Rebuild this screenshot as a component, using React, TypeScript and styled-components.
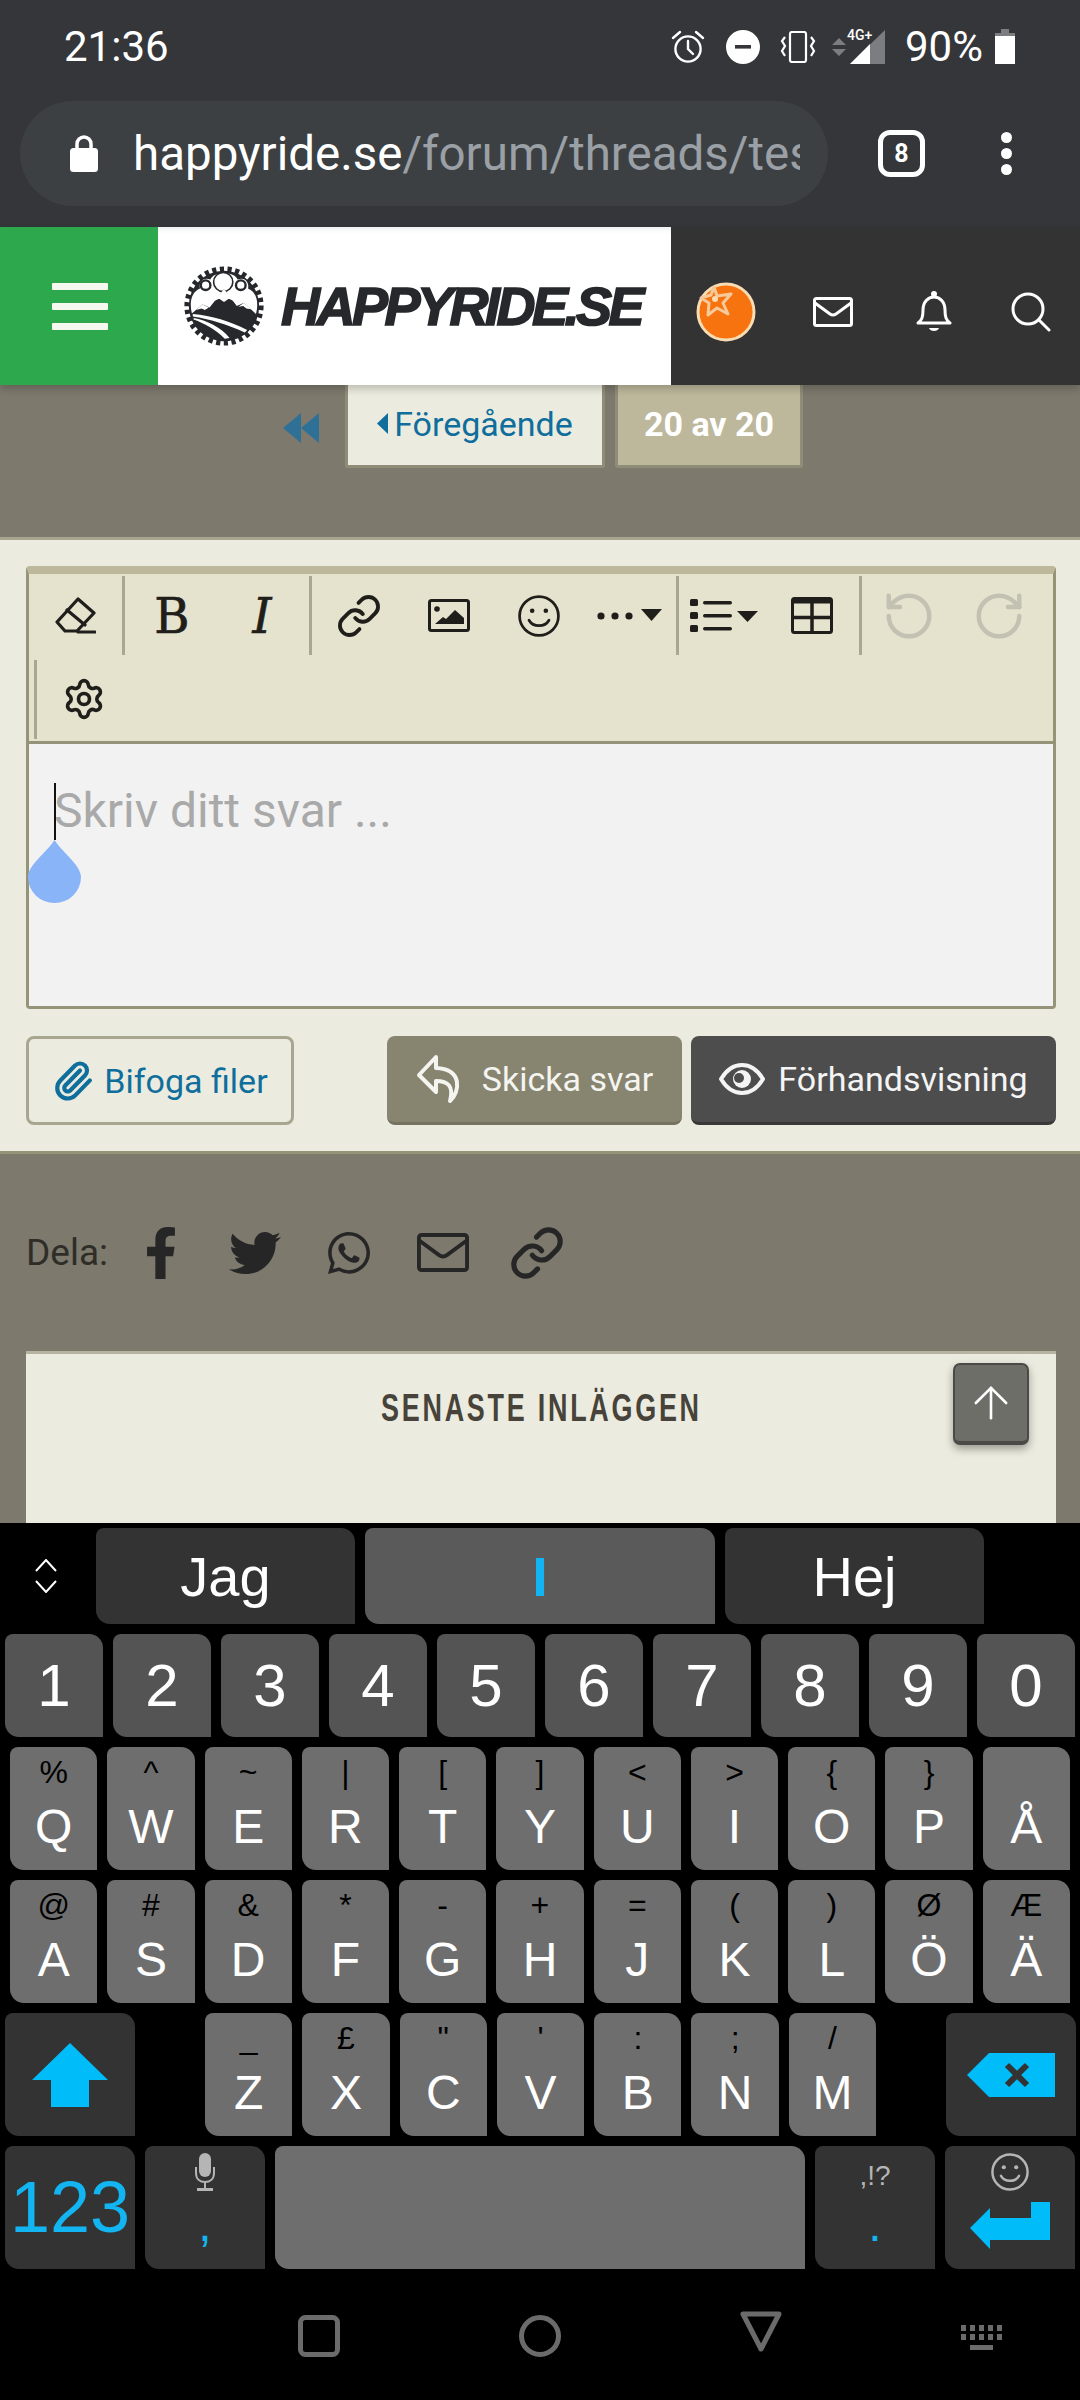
import styled, { createGlobalStyle } from "styled-components";
import { Link, RotateCcw, RotateCw, Settings, ArrowUp, Paperclip } from "lucide-react";
import { FaFacebookF, FaTwitter, FaWhatsapp } from "react-icons/fa";

const GlobalStyle = createGlobalStyle`
  html, body {
    margin: 0;
    padding: 0;
    background: #000;
    font-family: Roboto, "Liberation Sans", sans-serif;
  }
  * {
    box-sizing: border-box;
  }
  svg {
    display: block;
    flex: none;
  }
`;

const Phone = styled.div`
  width: 1080px;
  height: 2400px;
  display: flex;
  flex-direction: column;
  overflow: hidden;
`;

/* browser chrome */
const Chrome = styled.header`
  height: 227px;
  flex: none;
  background: #35363a;
  color: #fff;
`;

const StatusBar = styled.div`
  height: 101px;
  display: flex;
  align-items: center;
  padding: 0 65px 8px 64px;
`;

const Clock = styled.span`
  font-size: 42px;
  margin-right: auto;
`;

const StatusItem = styled.span<{ $gap: number }>`
  position: relative;
  display: block;
  margin-left: ${({ $gap }) => $gap}px;
`;

const Percent = styled.span`
  font-size: 42px;
  margin-left: 20px;
  width: 78px;
  white-space: nowrap;
`;

const NetworkLabel = styled.span`
  position: absolute;
  left: -3px;
  top: -3px;
  font-size: 14px;
  font-weight: 500;
  line-height: 16px;
  color: #fff;
`;

const UrlRow = styled.div`
  display: flex;
  align-items: center;
  padding-left: 20px;
`;

const UrlPill = styled.div`
  width: 808px;
  height: 105px;
  border-radius: 53px;
  background: #3c4043;
  display: flex;
  align-items: center;
  padding: 0 28px 0 50px;
  gap: 35px;
`;

const UrlText = styled.div`
  flex: 1;
  overflow: hidden;
  white-space: nowrap;
  font-size: 47.500px;
  line-height: 60px;
  color: #fff;
`;

const UrlPath = styled.span`
  color: #9aa0a6;
`;

const TabCount = styled.div`
  width: 47px;
  height: 47px;
  margin-left: 50px;
  border: 5px solid #fff;
  border-radius: 12px;
  display: flex;
  align-items: center;
  justify-content: center;
  font-size: 25px;
  font-weight: 700;
`;

const MenuDots = styled.div`
  margin-left: 76px;
  display: flex;
  flex-direction: column;
  gap: 5px;
`;

const MenuDot = styled.span`
  width: 11px;
  height: 11px;
  border-radius: 50%;
  background: #fff;
`;

/* site header */
const SiteNav = styled.nav`
  position: relative;
  z-index: 2;
  height: 158px;
  flex: none;
  display: flex;
  background: #333;
  box-shadow: 0 4px 8px rgba(0, 0, 0, 0.2);
`;

const BurgerCell = styled.div`
  width: 158px;
  background: #2ea84c;
  display: flex;
  flex-direction: column;
  justify-content: center;
  padding-left: 52px;
  gap: 13px;
`;

const BurgerBar = styled.span`
  width: 56px;
  height: 7px;
  border-radius: 1px;
  background: #f4f8ee;
`;

const LogoCell = styled.div`
  width: 513px;
  background: #fff;
  box-shadow: inset 0 6px 6px -4px rgba(0, 0, 0, 0.08);
  display: flex;
  align-items: center;
  padding-left: 26px;
  gap: 17px;
`;

const LogoText = styled.span`
  font-family: "Liberation Sans", sans-serif;
  font-size: 54px;
  font-weight: 700;
  font-style: italic;
  letter-spacing: -3.500px;
  color: #26282b;
  -webkit-text-stroke: 1.6px #26282b;
  white-space: nowrap;
`;

const NavActions = styled.div`
  flex: 1;
  display: grid;
  grid-template-columns: 109px 105px 97px 98px;
  align-items: center;
  justify-items: center;
  padding-top: 12px;
`;

/* page body */
const Page = styled.main`
  flex: 1;
  min-height: 0;
  display: flex;
  flex-direction: column;
  background: #7d796d;
  overflow: hidden;
`;

const Pager = styled.div`
  height: 83px;
  flex: none;
  display: flex;
  gap: 10px;
  padding-left: 283px;
`;

const PagerFirst = styled.div`
  width: 52px;
  display: flex;
  align-items: center;
  padding-top: 3px;
`;

const PagerButton = styled.div<{ $current?: boolean }>`
  display: flex;
  align-items: center;
  justify-content: center;
  gap: 6px;
  width: ${({ $current }) => ($current ? 188 : 260)}px;
  border: 3px solid #8f8c78;
  border-top: 0;
  border-radius: 0 0 3px 3px;
  padding-bottom: 3px;
  font-size: 34px;
  font-weight: ${({ $current }) => ($current ? 700 : 400)};
  background: ${({ $current }) => ($current ? "#bdb89c" : "#ecebdf")};
  color: ${({ $current }) => ($current ? "#fff" : "#0f6e9c")};
`;

const ReplyPanel = styled.section`
  flex: none;
  margin-top: 69px;
  background: #ecebdf;
  border-top: 3px solid #a8a690;
  border-bottom: 3px solid #959378;
  padding: 26px 24px 26px 26px;
`;

const Editor = styled.div`
  border: 3px solid #959378;
  border-top: 8px solid #bdb89c;
  border-radius: 4px;
`;

const Toolbar = styled.div`
  height: 167px;
  display: flex;
  flex-direction: column;
  background: #e5e2ce;
  border-bottom: 0;
`;

const ToolRow = styled.div<{ $indent: number }>`
  flex: 1;
  display: flex;
  align-items: center;
  padding-left: ${({ $indent }) => $indent}px;
`;

const ToolButton = styled.span<{ $width?: number; $muted?: boolean }>`
  width: ${({ $width }) => $width ?? 90}px;
  height: 60px;
  display: flex;
  align-items: center;
  justify-content: center;
  color: ${({ $muted }) => ($muted ? "#c3c1b1" : "#1f1e1a")};
`;

const ToolGlyph = styled.span<{ $italic?: boolean }>`
  font-family: "DejaVu Serif", "Liberation Serif", serif;
  font-size: 48px;
  line-height: 60px;
  font-style: ${({ $italic }) => ($italic ? "italic" : "normal")};
  -webkit-text-stroke: 0.7px #1f1e1a;
`;

const ToolSeparator = styled.span`
  width: 3px;
  height: 79px;
  margin: 0 2px;
  background: #a9a792;
`;

const EditorBody = styled.div`
  position: relative;
  height: 265px;
  background: #f2f2f2;
  border-top: 3px solid #959378;
  padding: 37px 0 0 25px;
`;

const Placeholder = styled.div`
  font-size: 48px;
  line-height: 60px;
  color: #a9a9a9;
`;

const TextCaret = styled.span`
  position: absolute;
  left: 25px;
  top: 39px;
  width: 2px;
  height: 57px;
  background: #111;
`;

const CaretHandle = styled.span`
  position: absolute;
  left: -1px;
  top: 96px;
`;

const FormActions = styled.div`
  margin-top: 27px;
  display: flex;
  gap: 9px;
`;

const ActionButton = styled.div<{ $kind: "plain" | "olive" | "dark" }>`
  height: 89px;
  display: flex;
  align-items: center;
  justify-content: center;
  border-radius: 8px;
  font-size: 34px;
  white-space: nowrap;
  ${({ $kind }) =>
    $kind === "plain"
      ? "width: 268px; gap: 10px; margin-right: auto; color: #0f6e9c; background: #ecebdf; border: 3px solid #a8a690;"
      : $kind === "olive"
        ? "width: 295px; gap: 18px; color: #f4f4f0; background: #87846f; border-bottom: 3px solid #75725f;"
        : "width: 365px; gap: 13px; color: #f4f4f4; background: #4d4d4d; border-bottom: 3px solid #383838;"}
`;

const ShareRow = styled.div`
  height: 197px;
  flex: none;
  display: flex;
  align-items: center;
  padding-left: 26px;
  color: #262626;
`;

const ShareLabel = styled.span`
  width: 88px;
  font-size: 37px;
  color: #2f2d28;
`;

const ShareIcon = styled.span`
  width: 94px;
  display: flex;
  justify-content: center;
`;

const LatestCard = styled.section`
  position: relative;
  flex: 1;
  margin: 0 24px 0 26px;
  background: #ecebdf;
  border-top: 3px solid #b6b4a0;
  padding-top: 30px;
  text-align: center;
`;

const LatestTitle = styled.h2`
  display: inline-block;
  margin: 0;
  font-family: "Liberation Sans", sans-serif;
  font-size: 39px;
  line-height: 48px;
  font-weight: 700;
  letter-spacing: 4px;
  color: #47433a;
  white-space: nowrap;
  transform: scaleX(0.69);
`;

const ScrollTop = styled.div`
  position: absolute;
  right: 27px;
  top: 9px;
  width: 76px;
  height: 82px;
  display: flex;
  align-items: center;
  justify-content: center;
  border: 2px solid #4a4a46;
  border-bottom-width: 4px;
  border-radius: 7px;
  background: #6e6e69;
  color: #fff;
  box-shadow: 0 4px 8px rgba(0, 0, 0, 0.35);
`;

/* keyboard */
const Keyboard = styled.section`
  height: 877px;
  flex: none;
  background: #000;
  padding-top: 5px;
  font-family: "Liberation Sans", sans-serif;
  display: flex;
  flex-direction: column;
  gap: 10px;
`;

const SuggestRow = styled.div`
  height: 96px;
  flex: none;
  display: flex;
  gap: 10px;
  padding-left: 34px;
`;

const SuggestToggle = styled.span`
  width: 52px;
  display: flex;
  align-items: center;
`;

const Suggestion = styled.div<{ $active?: boolean }>`
  width: ${({ $active }) => ($active ? 350 : 259)}px;
  display: flex;
  align-items: center;
  justify-content: center;
  border-radius: 8px 14px 0 14px;
  font-size: 56px;
  background: ${({ $active }) => ($active ? "#5a5a5a" : "#333")};
  color: ${({ $active }) => ($active ? "#12b5f2" : "#fff")};
  font-weight: ${({ $active }) => ($active ? 700 : 400)};
`;

const KeyRow = styled.div<{ $height: number; $inset: number }>`
  height: ${({ $height }) => $height}px;
  flex: none;
  display: flex;
  gap: 10px;
  padding: 0 ${({ $inset }) => $inset}px;
`;

const keyTones = { number: "#545454", letter: "#6e6e6e", dark: "#333" };

const Key = styled.div<{ $tone: keyof typeof keyTones; $width?: number }>`
  ${({ $width }) => ($width ? `width: ${$width}px; flex: none;` : "flex: 1; min-width: 0;")}
  display: flex;
  flex-direction: column;
  align-items: center;
  border-radius: 8px 14px 0 14px;
  background: ${({ $tone }) => keyTones[$tone]};
  color: #fff;
`;

const NumberLabel = styled.span`
  font-size: 60px;
  line-height: 103px;
`;

const KeyAlt = styled.span`
  height: 50px;
  font-size: 32px;
  line-height: 50px;
  color: #000;
`;

const KeyMain = styled.span`
  height: 60px;
  font-size: 48px;
  line-height: 60px;
`;

const KeyIconCenter = styled.span`
  flex: 1;
  display: flex;
  align-items: center;
  justify-content: center;
`;

const ModeLabel = styled.span`
  font-size: 72px;
  line-height: 123px;
  color: #12b5f2;
`;

const KeyStack = styled.span`
  flex: 1;
  display: flex;
  flex-direction: column;
  align-items: center;
  justify-content: space-between;
  padding: 7px 0 20px;
`;

const PunctuationHint = styled.span`
  font-size: 28px;
  line-height: 38px;
  margin-top: 4px;
  color: #b5b5b5;
`;

const BlueMark = styled.span`
  font-size: 48px;
  line-height: 48px;
  color: #12b5f2;
`;

const KeySpacer = styled.span`
  width: 50px;
  flex: none;
`;

const NavBar = styled.div`
  flex: 1;
  display: grid;
  grid-template-columns: repeat(4, 221px);
  justify-items: center;
  align-items: start;
  padding: 36px 0 0 208px;
`;

const NavSlot = styled.span<{ $shift?: number }>`
  display: block;
  margin-top: ${({ $shift }) => $shift ?? 0}px;
`;

/* icons */
const AlarmIcon = () => (
  <svg width="34" height="34" viewBox="0 0 34 34" fill="none" stroke="#fff" strokeWidth="2.4" strokeLinecap="round">
    <circle cx="17" cy="19" r="12.6" />
    <path d="M17 11v8l5 5M2 8l7-6M32 8l-7-6" />
  </svg>
);

const DndIcon = () => (
  <svg width="34" height="34" viewBox="0 0 34 34">
    <circle cx="17" cy="17" r="17" fill="#fff" />
    <rect x="9" y="15" width="16" height="3.6" fill="#35363a" />
  </svg>
);

const VibrateIcon = () => (
  <svg width="36" height="32" viewBox="0 0 36 32" fill="none" stroke="#fff" strokeWidth="2.2">
    <rect x="10" y="1" width="16" height="30" rx="2" />
    <path d="M5 6 2 10l3 5-3 5 3 5M31 6l3 4-3 5 3 5-3 5" />
  </svg>
);

const DataArrows = () => (
  <svg width="14" height="18" viewBox="0 0 14 18" fill="#7c7d80">
    <path d="M7 0l7 7H0zM7 18l-7-7h14z" />
  </svg>
);

const SignalIcon = () => (
  <svg width="35" height="34" viewBox="0 0 35 34">
    <path d="M35 0v34H0z" fill="#7c7d80" />
    <path d="M20 14v20H0z" fill="#fff" />
  </svg>
);

const BatteryIcon = () => (
  <svg width="20" height="35" viewBox="0 0 20 35">
    <path d="M6 0h8v4h6v6H0V4h6z" fill="#7c7d80" />
    <path d="M0 7h20v28H0z" fill="#fff" />
  </svg>
);

const LockIcon = () => (
  <svg width="28" height="37" viewBox="0 0 28 37">
    <path d="M7 15V9a7 7 0 0 1 14 0v6" fill="none" stroke="#fff" strokeWidth="3.5" />
    <rect y="13" width="28" height="24" rx="3.5" fill="#fff" />
  </svg>
);

const SiteLogo = () => (
  <svg width="80" height="82" viewBox="0 0 100 100">
    <circle cx="50" cy="50" r="46" fill="none" stroke="#26282b" strokeWidth="7" strokeDasharray="5.2 4.4" />
    <circle cx="50" cy="50" r="44" fill="#26282b" />
    <path d="M10 60C6 44 10 32 20 28c-2-7 4-15 13-11 4-11 30-11 34 0 9-4 15 4 13 11 10 4 14 16 10 32z" fill="#fff" />
    <circle cx="49" cy="20" r="12" fill="#fff" stroke="#26282b" strokeWidth="2" />
    <circle cx="27" cy="24" r="6" fill="#fff" stroke="#26282b" strokeWidth="3" />
    <circle cx="71" cy="24" r="6" fill="#fff" stroke="#26282b" strokeWidth="3" />
    <path d="M9 60l14-12 9 4 18-23 16 21 9-4 15 14v8H9z" fill="#26282b" />
    <path d="M50 29L37 44l7-3 6 4 6-4 7 3zM23 48l-8 7 7-2 4 2 5-3zM75 46l-7 5 6-1 4 3 6 1z" fill="#fff" />
    <path d="M11 60c24 2 46 9 68 20l-3 3C54 73 32 66 11 63zM12 65c16 3 34 11 45 25l-6 1C40 80 26 72 12 67z" fill="#fff" />
  </svg>
);

const UserBadge = () => (
  <svg width="60" height="60" viewBox="0 0 60 60">
    <circle cx="30" cy="30" r="28" fill="#f6730f" stroke="#f8dcb4" strokeWidth="3" />
    <path d="M18 5l3 9 14-2-8 9 5 11-11-6-9 7 1-12-8-5 10-3z" fill="#f6730f" stroke="#f5c99a" strokeWidth="3" strokeLinejoin="round" />
    <circle cx="19" cy="17" r="3" fill="#f8dcb4" />
  </svg>
);

const MailIcon = ({ color, size }: { color: string; size: number }) => (
  <svg width={size} height={size * 0.75} viewBox="0 0 40 30" fill="none" stroke={color} strokeWidth="3" strokeLinejoin="round">
    <rect x="1.5" y="1.5" width="37" height="27" rx="2" />
    <path d="M2 6l15 11c2 1.4 4 1.4 6 0L38 6" />
  </svg>
);

const BellIcon = () => (
  <svg width="36" height="42" viewBox="0 0 36 42" fill="none" stroke="#fff" strokeWidth="3" strokeLinejoin="round">
    <path d="M2 32c4-3 5-6 5-13C7 11 12 6 18 6s11 5 11 13c0 7 1 10 5 13z" />
    <circle cx="18" cy="3" r="1.5" fill="#fff" />
    <path d="M13 37h10c-1 4-9 4-10 0z" fill="#fff" stroke="none" />
  </svg>
);

const SearchIcon = () => (
  <svg width="40" height="40" viewBox="0 0 40 40" fill="none" stroke="#fff" strokeWidth="3" strokeLinecap="round">
    <circle cx="17" cy="17" r="15" />
    <path d="M28 28l10 10" />
  </svg>
);

const DoubleLeft = () => (
  <svg width="36" height="30" viewBox="0 0 36 30" fill="#2f7196">
    <path d="M18 0v30L0 15zM36 0v30L18 15z" />
  </svg>
);

const SmallCaretLeft = () => (
  <svg width="11" height="21" viewBox="0 0 11 21" fill="#0f6e9c">
    <path d="M11 0v21L0 10.5z" />
  </svg>
);

const EraserIcon = () => (
  <svg width="41" height="37" viewBox="0 0 41 37" fill="none" stroke="#1f1e1a" strokeWidth="3.2" strokeLinejoin="round" strokeLinecap="round">
    <path d="M23 2l16 14-17 18H10L2 25z" />
    <path d="M12 13l18 15M23 35h17" />
  </svg>
);

const ImageIcon = () => (
  <svg width="42" height="33" viewBox="0 0 42 33" fill="none">
    <rect x="1.5" y="1.5" width="39" height="30" rx="2" stroke="#1f1e1a" strokeWidth="3" />
    <circle cx="9" cy="10" r="2.8" fill="#1f1e1a" />
    <path d="M7 25l8-7 3 2 9-9 9 8v6z" fill="#1f1e1a" />
  </svg>
);

const SmileIcon = ({ color, size }: { color: string; size: number }) => (
  <svg width={size} height={size} viewBox="0 0 40 40" fill="none" stroke={color} strokeWidth="2.6">
    <circle cx="20" cy="20" r="18.5" />
    <circle cx="13.5" cy="15" r="2.2" fill={color} stroke="none" />
    <circle cx="26.5" cy="15" r="2.2" fill={color} stroke="none" />
    <path d="M10.5 24c4 7 15 7 19 0" strokeLinecap="round" />
  </svg>
);

const MoreIcon = () => (
  <svg width="66" height="20" viewBox="0 0 66 20" fill="#1f1e1a">
    <circle cx="5" cy="10" r="3.6" />
    <circle cx="19" cy="10" r="3.6" />
    <circle cx="33" cy="10" r="3.6" />
    <path d="M45 3h21L55.500 15z" />
  </svg>
);

const ListIcon = () => (
  <svg width="68" height="33" viewBox="0 0 68 33" fill="#1f1e1a">
    <rect y="0" width="8" height="7" rx="1.500" />
    <rect y="13" width="8" height="7" rx="1.500" />
    <rect y="26" width="8" height="7" rx="1.500" />
    <rect x="13" y="2" width="29" height="3.500" rx="1.700" />
    <rect x="13" y="15" width="29" height="3.500" rx="1.700" />
    <rect x="13" y="28" width="29" height="3.500" rx="1.700" />
    <path d="M47 12h21L57.500 23z" />
  </svg>
);

const TableIcon = () => (
  <svg width="42" height="37" viewBox="0 0 42 37" fill="none" stroke="#1f1e1a">
    <rect x="1.500" y="1.500" width="39" height="34" rx="2" strokeWidth="3" />
    <path d="M2 4h38" strokeWidth="5" />
    <path d="M21 4v31M2 20.500h38" strokeWidth="3.500" />
  </svg>
);

const ReplyIcon = () => (
  <svg width="48" height="50" viewBox="0 0 48 50" fill="none" stroke="#f4f4f0" strokeWidth="4" strokeLinejoin="round">
    <path d="M20 3L3 21l17 17V27c12 0 18 5 14 20 10-9 13-32-14-33z" />
  </svg>
);

const EyeIcon = () => (
  <svg width="46" height="32" viewBox="0 0 46 32">
    <path d="M2 16C8 6 15 2 23 2s15 4 21 14c-6 10-13 14-21 14S8 26 2 16z" fill="none" stroke="#f4f4f4" strokeWidth="4" />
    <circle cx="23" cy="16" r="9" fill="#f4f4f4" />
    <circle cx="20" cy="15" r="5" fill="#4d4d4d" />
  </svg>
);

const DropHandle = () => (
  <svg width="53" height="63" viewBox="0 0 53 63">
    <path d="M26.500 0C33 11 53 25 53 37a26.500 26 0 0 1-53 0C0 25 20 11 26.500 0z" fill="#8ab4f8" />
  </svg>
);

const ToggleIcon = () => (
  <svg width="24" height="34" viewBox="0 0 24 34" fill="none" stroke="#fff" strokeWidth="2">
    <path d="M2 12L12 1l10 11M2 22l10 11 10-11" />
  </svg>
);

const ShiftIcon = () => (
  <svg width="76" height="64" viewBox="0 0 76 64" fill="#00bcf8">
    <path d="M38 0l38 37H57v27H19V37H0z" />
  </svg>
);

const BackspaceIcon = () => (
  <svg width="88" height="44" viewBox="0 0 88 44">
    <path d="M0 22L22 0h66v44H22z" fill="#00bcf8" />
    <path d="M40 12l20 20M60 12L40 32" stroke="#333" strokeWidth="6" />
  </svg>
);

const MicIcon = () => (
  <svg width="20" height="38" viewBox="0 0 20 38" fill="#b5b5b5">
    <rect x="4" y="0" width="12" height="24" rx="6" />
    <path d="M1 14v6c0 6 4 9 9 9s9-3 9-9v-6" fill="none" stroke="#b5b5b5" strokeWidth="2" />
    <rect x="9" y="28" width="2" height="7" />
    <rect x="2" y="35" width="16" height="3" />
  </svg>
);

const EnterIcon = () => (
  <svg width="80" height="47" viewBox="0 0 80 47" fill="#00bcf8">
    <path d="M80 0v38H20v9L0 26 20 6v10h41V0z" />
  </svg>
);

const NavSquare = () => (
  <svg width="42" height="42" viewBox="0 0 42 42" fill="none" stroke="#6b6b6b" strokeWidth="5">
    <rect x="2.500" y="2.500" width="37" height="37" rx="5" />
  </svg>
);

const NavCircle = () => (
  <svg width="42" height="42" viewBox="0 0 42 42" fill="none" stroke="#6b6b6b" strokeWidth="5">
    <circle cx="21" cy="21" r="18.500" />
  </svg>
);

const NavTriangle = () => (
  <svg width="42" height="42" viewBox="0 0 42 42" fill="none" stroke="#6b6b6b" strokeWidth="5" strokeLinejoin="round">
    <path d="M3 3h36L21 38z" />
  </svg>
);

const NavKeyboard = () => (
  <svg width="42" height="26" viewBox="0 0 42 26" fill="#6b6b6b">
    {[0, 9, 18, 27, 36].map((x) => (
      <g key={x}>
        <rect x={x} y="0" width="5" height="6" />
        <rect x={x} y="9" width="5" height="6" />
      </g>
    ))}
    <rect x="9" y="20" width="23" height="5" />
  </svg>
);

const numbers = ["1", "2", "3", "4", "5", "6", "7", "8", "9", "0"];
const topLetters = [
  ["%", "Q"], ["^", "W"], ["~", "E"], ["|", "R"], ["[", "T"], ["]", "Y"],
  ["<", "U"], [">", "I"], ["{", "O"], ["}", "P"], ["", "Å"],
];
const middleLetters = [
  ["@", "A"], ["#", "S"], ["&", "D"], ["*", "F"], ["-", "G"], ["+", "H"],
  ["=", "J"], ["(", "K"], [")", "L"], ["Ø", "Ö"], ["Æ", "Ä"],
];
const bottomLetters = [
  ["_", "Z"], ["£", "X"], ['"', "C"], ["'", "V"], [":", "B"], [";", "N"], ["/", "M"],
];

const LetterKey = ({ alt, main, width }: { alt: string; main: string; width?: number }) => (
  <Key $tone="letter" $width={width}>
    <KeyAlt>{alt}</KeyAlt>
    <KeyMain>{main}</KeyMain>
  </Key>
);

export default function App() {
  return (
    <Phone>
      <GlobalStyle />
      <Chrome>
        <StatusBar>
          <Clock>21:36</Clock>
          <StatusItem $gap={0}><AlarmIcon /></StatusItem>
          <StatusItem $gap={21}><DndIcon /></StatusItem>
          <StatusItem $gap={20}><VibrateIcon /></StatusItem>
          <StatusItem $gap={16}><DataArrows /></StatusItem>
          <StatusItem $gap={4}>
            <SignalIcon />
            <NetworkLabel>4G+</NetworkLabel>
          </StatusItem>
          <Percent>90%</Percent>
          <StatusItem $gap={12}><BatteryIcon /></StatusItem>
        </StatusBar>
        <UrlRow>
          <UrlPill>
            <LockIcon />
            <UrlText>
              happyride.se<UrlPath>/forum/threads/tes</UrlPath>
            </UrlText>
          </UrlPill>
          <TabCount>8</TabCount>
          <MenuDots>
            <MenuDot />
            <MenuDot />
            <MenuDot />
          </MenuDots>
        </UrlRow>
      </Chrome>

      <SiteNav>
        <BurgerCell>
          <BurgerBar />
          <BurgerBar />
          <BurgerBar />
        </BurgerCell>
        <LogoCell>
          <SiteLogo />
          <LogoText>HAPPYRIDE.SE</LogoText>
        </LogoCell>
        <NavActions>
          <UserBadge />
          <MailIcon color="#fff" size={40} />
          <BellIcon />
          <SearchIcon />
        </NavActions>
      </SiteNav>

      <Page>
        <Pager>
          <PagerFirst><DoubleLeft /></PagerFirst>
          <PagerButton><SmallCaretLeft />Föregående</PagerButton>
          <PagerButton $current>20 av 20</PagerButton>
        </Pager>

        <ReplyPanel>
          <Editor>
            <Toolbar>
              <ToolRow $indent={1}>
                <ToolButton><EraserIcon /></ToolButton>
                <ToolSeparator />
                <ToolButton><ToolGlyph>B</ToolGlyph></ToolButton>
                <ToolButton><ToolGlyph $italic>I</ToolGlyph></ToolButton>
                <ToolSeparator />
                <ToolButton><Link size={46} strokeWidth={2} /></ToolButton>
                <ToolButton><ImageIcon /></ToolButton>
                <ToolButton><SmileIcon color="#1f1e1a" size={42} /></ToolButton>
                <ToolButton><MoreIcon /></ToolButton>
                <ToolSeparator />
                <ToolButton $width={86}><ListIcon /></ToolButton>
                <ToolButton><TableIcon /></ToolButton>
                <ToolSeparator />
                <ToolButton $muted><RotateCcw size={54} strokeWidth={2} /></ToolButton>
                <ToolButton $muted><RotateCw size={54} strokeWidth={2} /></ToolButton>
              </ToolRow>
              <ToolRow $indent={3}>
                <ToolSeparator />
                <ToolButton><Settings size={44} strokeWidth={2} /></ToolButton>
              </ToolRow>
            </Toolbar>
            <EditorBody>
              <Placeholder>Skriv ditt svar ...</Placeholder>
              <TextCaret />
              <CaretHandle><DropHandle /></CaretHandle>
            </EditorBody>
          </Editor>
          <FormActions>
            <ActionButton $kind="plain">
              <Paperclip size={42} color="#0f6e9c" strokeWidth={2.4} />
              Bifoga filer
            </ActionButton>
            <ActionButton $kind="olive"><ReplyIcon />Skicka svar</ActionButton>
            <ActionButton $kind="dark"><EyeIcon />Förhandsvisning</ActionButton>
          </FormActions>
        </ReplyPanel>

        <ShareRow>
          <ShareLabel>Dela:</ShareLabel>
          <ShareIcon><FaFacebookF size={52} /></ShareIcon>
          <ShareIcon><FaTwitter size={52} /></ShareIcon>
          <ShareIcon><FaWhatsapp size={48} /></ShareIcon>
          <ShareIcon><MailIcon color="#262626" size={52} /></ShareIcon>
          <ShareIcon><Link size={56} strokeWidth={2.2} /></ShareIcon>
        </ShareRow>

        <LatestCard>
          <LatestTitle>SENASTE INLÄGGEN</LatestTitle>
          <ScrollTop><ArrowUp size={52} strokeWidth={1.2} /></ScrollTop>
        </LatestCard>
      </Page>

      <Keyboard>
        <SuggestRow>
          <SuggestToggle><ToggleIcon /></SuggestToggle>
          <Suggestion>Jag</Suggestion>
          <Suggestion $active>I</Suggestion>
          <Suggestion>Hej</Suggestion>
        </SuggestRow>
        <KeyRow $height={103} $inset={5}>
          {numbers.map((n) => (
            <Key key={n} $tone="number"><NumberLabel>{n}</NumberLabel></Key>
          ))}
        </KeyRow>
        <KeyRow $height={123} $inset={10}>
          {topLetters.map(([alt, main]) => (
            <LetterKey key={main} alt={alt} main={main} />
          ))}
        </KeyRow>
        <KeyRow $height={123} $inset={10}>
          {middleLetters.map(([alt, main]) => (
            <LetterKey key={main} alt={alt} main={main} />
          ))}
        </KeyRow>
        <KeyRow $height={123} $inset={5}>
          <Key $tone="dark" $width={130}>
            <KeyIconCenter><ShiftIcon /></KeyIconCenter>
          </Key>
          <KeySpacer />
          {bottomLetters.map(([alt, main]) => (
            <LetterKey key={main} alt={alt} main={main} width={87.3} />
          ))}
          <KeySpacer />
          <Key $tone="dark" $width={130}>
            <KeyIconCenter><BackspaceIcon /></KeyIconCenter>
          </Key>
        </KeyRow>
        <KeyRow $height={123} $inset={5}>
          <Key $tone="dark" $width={130}><ModeLabel>123</ModeLabel></Key>
          <Key $tone="dark" $width={120}>
            <KeyStack>
              <MicIcon />
              <BlueMark>,</BlueMark>
            </KeyStack>
          </Key>
          <Key $tone="letter" $width={530} />
          <Key $tone="dark" $width={120}>
            <KeyStack>
              <PunctuationHint>,!?</PunctuationHint>
              <BlueMark>.</BlueMark>
            </KeyStack>
          </Key>
          <Key $tone="dark" $width={130}>
            <KeyStack>
              <SmileIcon color="#b5b5b5" size={38} />
              <EnterIcon />
            </KeyStack>
          </Key>
        </KeyRow>
        <NavBar>
          <NavSlot><NavSquare /></NavSlot>
          <NavSlot><NavCircle /></NavSlot>
          <NavSlot $shift={-4}><NavTriangle /></NavSlot>
          <NavSlot $shift={10}><NavKeyboard /></NavSlot>
        </NavBar>
      </Keyboard>
    </Phone>
  );
}
